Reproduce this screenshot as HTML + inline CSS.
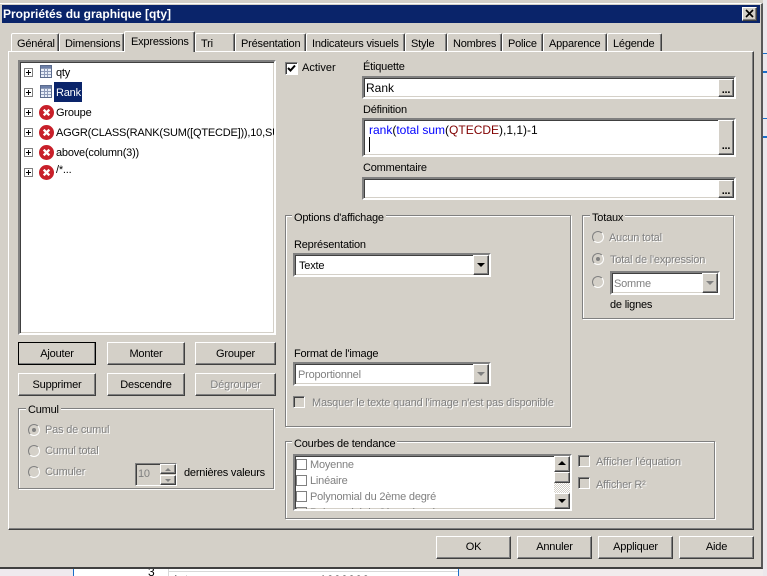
<!DOCTYPE html>
<html lang="fr"><head><meta charset="utf-8"><title>Propriétés du graphique [qty]</title>
<style>
html,body{margin:0;padding:0;background:#d4d0c8}
#p{position:relative;width:767px;height:576px;overflow:hidden;background:#d4d0c8;font:11px/16px "Liberation Sans",Arial,sans-serif;letter-spacing:-.2px;color:#000}
#p div,#p span.t,#p svg{position:absolute;box-sizing:border-box}
.t{white-space:nowrap}
.d{color:#808080;text-shadow:1px 1px 0 #fff}
.btn{background:#d4d0c8;border:1px solid;border-color:#fff #404040 #404040 #fff;box-shadow:inset -1px -1px 0 #808080;text-align:center;white-space:nowrap}
.sunk{background:#fff;border:2px solid;border-color:#808080 #fff #fff #808080;box-shadow:inset 1px 1px 0 #404040,inset -1px -1px 0 #d4d0c8}
.grp{border:1px solid #808080;box-shadow:1px 1px 0 #fff,inset 1px 1px 0 #fff}
.lg{background:#d4d0c8;padding:0 2px;white-space:nowrap}
.tab{background:#d4d0c8;border:1px solid;border-color:#fff #404040 transparent #fff;border-bottom:0;border-radius:2px 2px 0 0;box-shadow:inset -1px 0 0 #808080;padding:2px 0 0 5px;white-space:nowrap;height:18px;top:33px}
.plus{width:9px;height:9px;left:24px;border:1px solid #808080;background:#fff}
.plus:before{content:"";position:absolute;left:1px;top:3px;width:5px;height:1px;background:#000}
.plus:after{content:"";position:absolute;left:3px;top:1px;width:1px;height:5px;background:#000}
.arr{width:0;height:0;border-left:4px solid transparent;border-right:4px solid transparent;border-top:4px solid #000}
.arrup{width:0;height:0;border-left:4px solid transparent;border-right:4px solid transparent;border-bottom:4px solid #000}
.chk{background:#d4d0c8;width:12px;height:12px;border:1px solid;border-color:#808080 #fff #fff #808080;box-shadow:inset 1px 1px 0 #404040}
.rad{width:12px;height:12px;border-radius:50%;border:1px solid;border-color:#808080 #fff #fff #808080;background:#d4d0c8}
.dot{width:4px;height:4px;border-radius:50%;background:#808080;left:3px;top:3px}
</style></head><body><div id="p">

<!-- background behind dialog -->
<div style="left:0;top:569px;width:767px;height:7px;background:#fff"></div>
<div style="left:0;top:569px;width:73px;height:7px;background:#efeaee"></div>
<div style="left:73px;top:569px;width:1px;height:7px;background:#1a6fc9"></div>
<div style="left:168px;top:569px;width:1px;height:7px;background:#d8d8d8"></div>
<div style="left:169px;top:571px;width:289px;height:1px;background:#d8d8d8"></div>
<div style="left:458px;top:569px;width:309px;height:7px;background:#f1eced"></div>
<div style="left:458px;top:569px;width:1px;height:7px;background:#1a6fc9"></div>
<span class="t" style="left:148px;top:564px;font-size:12px">3</span>
<span class="t" style="left:172px;top:572px">Auto</span>
<span class="t" style="left:320px;top:572px;letter-spacing:1px">1000000</span>
<div style="left:763px;top:0;width:4px;height:576px;background:#ece8ec"></div>
<div style="left:763px;top:53px;width:4px;height:1px;background:#1a6fc9"></div>
<div style="left:763px;top:71px;width:4px;height:2px;background:#1a6fc9"></div>
<div style="left:763px;top:118px;width:4px;height:1px;background:#1a6fc9"></div>
<div style="left:763px;top:136px;width:4px;height:2px;background:#1a6fc9"></div>

<!-- dialog -->
<div style="left:0;top:3px;width:763px;height:566px;background:#d4d0c8;border-top:1px solid #fff;border-right:2px solid #595959;border-bottom:2px solid #404040"></div>
<div style="left:2px;top:5px;width:758px;height:18px;background:#0a246a"></div>
<span class="t" style="left:3px;top:6px;color:#fff;font-weight:bold;font-size:12px;line-height:16px;letter-spacing:0">Propriétés du graphique [qty]</span>
<div class="btn" style="left:742px;top:7px;width:15px;height:14px"></div>
<svg style="left:745px;top:9px" width="9" height="9"><path d="M1 1L8 8M8 1L1 8" stroke="#000" stroke-width="1.6"/></svg>

<!-- tab pane -->
<div style="left:8px;top:51px;width:746px;height:479px;background:#d4d0c8;border:1px solid;border-color:#fff #404040 #404040 #fff;box-shadow:inset -1px -1px 0 #808080"></div>

<div class="tab" style="left:11px;width:48px">Général</div>
<div class="tab" style="left:59px;width:65px">Dimensions</div>
<div class="tab" style="left:195px;width:40px">Tri</div>
<div class="tab" style="left:235px;width:71px">Présentation</div>
<div class="tab" style="left:306px;width:99px">Indicateurs visuels</div>
<div class="tab" style="left:405px;width:42px">Style</div>
<div class="tab" style="left:447px;width:55px">Nombres</div>
<div class="tab" style="left:502px;width:41px">Police</div>
<div class="tab" style="left:543px;width:64px">Apparence</div>
<div class="tab" style="left:607px;width:55px">Légende</div>
<div class="tab" style="left:124px;width:71px;top:31px;height:21px;padding-top:2px;padding-left:6px;z-index:2">Expressions</div>

<!-- tree -->
<div class="sunk" style="left:18px;top:60px;width:258px;height:275px"></div>
<div class="plus" style="top:68px"></div>
<div class="plus" style="top:88px"></div>
<div class="plus" style="top:108px"></div>
<div class="plus" style="top:128px"></div>
<div class="plus" style="top:148px"></div>
<div class="plus" style="top:168px"></div>
<svg style="left:40px;top:65px" width="12" height="13"><rect x=".5" y=".5" width="11" height="12" fill="#e8eef8" stroke="#5a6a8c"/><path d="M1 3.5H11M1 6.5H11M1 9.5H11M4.5 3V12M7.5 3V12" stroke="#8d9ab8"/><rect x="1" y="1" width="10" height="2" fill="#6c7fa8"/></svg>
<svg style="left:40px;top:85px" width="12" height="13"><rect x=".5" y=".5" width="11" height="12" fill="#e8eef8" stroke="#5a6a8c"/><path d="M1 3.5H11M1 6.5H11M1 9.5H11M4.5 3V12M7.5 3V12" stroke="#8d9ab8"/><rect x="1" y="1" width="10" height="2" fill="#6c7fa8"/></svg>
<svg style="left:39px;top:105px" width="15" height="15"><circle cx="7.5" cy="7.5" r="7.5" fill="#c8202a"/><path d="M4.7 4.7L10.3 10.3M10.3 4.7L4.7 10.3" stroke="#fff" stroke-width="2.4"/></svg>
<svg style="left:39px;top:125px" width="15" height="15"><circle cx="7.5" cy="7.5" r="7.5" fill="#c8202a"/><path d="M4.7 4.7L10.3 10.3M10.3 4.7L4.7 10.3" stroke="#fff" stroke-width="2.4"/></svg>
<svg style="left:39px;top:145px" width="15" height="15"><circle cx="7.5" cy="7.5" r="7.5" fill="#c8202a"/><path d="M4.7 4.7L10.3 10.3M10.3 4.7L4.7 10.3" stroke="#fff" stroke-width="2.4"/></svg>
<svg style="left:39px;top:165px" width="15" height="15"><circle cx="7.5" cy="7.5" r="7.5" fill="#c8202a"/><path d="M4.7 4.7L10.3 10.3M10.3 4.7L4.7 10.3" stroke="#fff" stroke-width="2.4"/></svg>
<span class="t" style="left:56px;top:65px">qty</span>
<div style="left:54px;top:82px;width:28px;height:20px;background:#0a246a"></div>
<span class="t" style="left:56px;top:85px;color:#fff">Rank</span>
<span class="t" style="left:56px;top:105px">Groupe</span>
<div style="left:56px;top:125px;width:218px;height:16px;overflow:hidden;white-space:nowrap">AGGR(CLASS(RANK(SUM([QTECDE])),10,SUM</div>
<span class="t" style="left:56px;top:145px">above(column(3))</span>
<span class="t" style="left:56px;top:162px">/*...</span>

<!-- left buttons -->
<div class="btn" style="left:18px;top:342px;width:78px;height:23px;line-height:22px;outline:1px solid #000;outline-offset:-1px;border-color:#fff #404040 #404040 #fff">Ajouter</div>
<div class="btn" style="left:107px;top:342px;width:78px;height:23px;line-height:22px">Monter</div>
<div class="btn" style="left:195px;top:342px;width:81px;height:23px;line-height:22px">Grouper</div>
<div class="btn" style="left:18px;top:373px;width:78px;height:23px;line-height:22px">Supprimer</div>
<div class="btn" style="left:107px;top:373px;width:78px;height:23px;line-height:22px">Descendre</div>
<div class="btn d" style="left:195px;top:373px;width:81px;height:23px;line-height:22px">Dégrouper</div>

<!-- cumul -->
<div class="grp" style="left:18px;top:408px;width:256px;height:81px"></div>
<span class="t lg" style="left:26px;top:402px">Cumul</span>
<div class="rad" style="left:28px;top:424px"><div class="dot"></div></div>
<div class="rad" style="left:28px;top:445px"></div>
<div class="rad" style="left:28px;top:466px"></div>
<span class="t d" style="left:45px;top:422px">Pas de cumul</span>
<span class="t d" style="left:45px;top:443px">Cumul total</span>
<span class="t d" style="left:45px;top:464px">Cumuler</span>
<div style="left:135px;top:463px;width:42px;height:23px;background:#d4d0c8;border:1px solid;border-color:#808080 #fff #fff #808080;box-shadow:inset 1px 1px 0 #404040"></div>
<span class="t d" style="left:138px;top:466px;text-shadow:none">10</span>
<div class="btn" style="left:160px;top:464px;width:16px;height:10px"></div>
<div class="btn" style="left:160px;top:475px;width:16px;height:10px"></div>
<div class="arrup" style="left:165px;top:468px;border-width:0 3px 3px;border-bottom-color:#808080"></div>
<div class="arr" style="left:165px;top:479px;border-width:3px 3px 0;border-top-color:#808080"></div>
<span class="t" style="left:184px;top:465px">dernières valeurs</span>

<!-- right top -->
<div class="chk" style="left:285px;top:62px;width:13px;height:13px;background:#fff"></div>
<svg style="left:287px;top:64px" width="9" height="9"><path d="M1 4L3.5 6.5L8 1.5" fill="none" stroke="#000" stroke-width="2"/></svg>
<span class="t" style="left:302px;top:60px;letter-spacing:0">Activer</span>

<span class="t" style="left:363px;top:59px">Étiquette</span>
<div class="sunk" style="left:362px;top:76px;width:374px;height:23px"></div>
<span class="t" style="left:366px;top:80px;font-size:12px;letter-spacing:0">Rank</span>
<div class="btn" style="left:718px;top:79px;width:16px;height:18px;line-height:20px;font-weight:bold">...</div>

<span class="t" style="left:363px;top:102px">Définition</span>
<div class="sunk" style="left:362px;top:118px;width:374px;height:39px"></div>
<span class="t" style="left:369px;top:122px;color:#000;font-size:12px;letter-spacing:0"><span style="color:#00f">rank</span>(<span style="color:#00f">total sum</span>(<span style="color:#800000">QTECDE</span>),1,1)-1</span>
<div style="left:369px;top:137px;width:1px;height:15px;background:#000"></div>
<div class="btn" style="left:718px;top:120px;width:16px;height:35px;line-height:50px;font-weight:bold">...</div>

<span class="t" style="left:363px;top:160px">Commentaire</span>
<div class="sunk" style="left:362px;top:177px;width:374px;height:23px"></div>
<div class="btn" style="left:718px;top:180px;width:16px;height:18px;line-height:20px;font-weight:bold">...</div>

<!-- options -->
<div class="grp" style="left:285px;top:215px;width:286px;height:212px"></div>
<span class="t lg" style="left:292px;top:210px">Options d'affichage</span>
<span class="t" style="left:294px;top:237px">Représentation</span>
<div class="sunk" style="left:293px;top:253px;width:198px;height:24px"></div>
<span class="t" style="left:299px;top:258px">Texte</span>
<div class="btn" style="left:473px;top:255px;width:16px;height:20px"></div>
<div class="arr" style="left:477px;top:263px"></div>

<span class="t" style="left:294px;top:346px">Format de l'image</span>
<div class="sunk" style="left:293px;top:362px;width:198px;height:24px"></div>
<span class="t" style="left:298px;top:367px;color:#808080">Proportionnel</span>
<div class="btn" style="left:473px;top:364px;width:16px;height:20px"></div>
<div class="arr" style="left:477px;top:372px;border-top-color:#808080"></div>
<div class="chk" style="left:293px;top:396px"></div>
<span class="t d" style="left:312px;top:395px">Masquer le texte quand l'image n'est pas disponible</span>

<!-- totaux -->
<div class="grp" style="left:582px;top:215px;width:152px;height:104px"></div>
<span class="t lg" style="left:590px;top:210px">Totaux</span>
<div class="rad" style="left:592px;top:231px"></div>
<div class="rad" style="left:592px;top:253px"><div class="dot"></div></div>
<div class="rad" style="left:592px;top:276px"></div>
<span class="t d" style="left:609px;top:230px">Aucun total</span>
<span class="t d" style="left:610px;top:252px">Total de l'expression</span>
<div class="sunk" style="left:610px;top:271px;width:110px;height:24px"></div>
<span class="t" style="left:614px;top:276px;color:#808080">Somme</span>
<div class="btn" style="left:702px;top:273px;width:16px;height:20px"></div>
<div class="arr" style="left:706px;top:281px;border-top-color:#808080"></div>
<span class="t" style="left:610px;top:297px">de lignes</span>

<!-- courbes -->
<div class="grp" style="left:285px;top:441px;width:430px;height:78px"></div>
<span class="t lg" style="left:292px;top:436px">Courbes de tendance</span>
<div class="sunk" style="left:293px;top:454px;width:279px;height:57px;overflow:hidden"></div>
<div style="left:295px;top:456px;width:259px;height:53px;overflow:hidden">
  <div style="left:1px;top:3px;width:11px;height:11px;border:1px solid #808080"></div>
  <div style="left:1px;top:19px;width:11px;height:11px;border:1px solid #808080"></div>
  <div style="left:1px;top:35px;width:11px;height:11px;border:1px solid #808080"></div>
  <div style="left:1px;top:51px;width:11px;height:11px;border:1px solid #808080"></div>
  <span class="t" style="left:15px;top:1px;color:#808080">Moyenne</span>
  <span class="t" style="left:15px;top:17px;color:#808080">Linéaire</span>
  <span class="t" style="left:15px;top:33px;color:#808080">Polynomial du 2ème degré</span>
  <span class="t" style="left:15px;top:49px;color:#808080">Polynomial du 3ème degré</span>
</div>
<div style="left:554px;top:472px;width:16px;height:21px;background:repeating-conic-gradient(#d4d0c8 0 25%,#fff 0 50%) 0 0/2px 2px"></div>
<div class="btn" style="left:554px;top:456px;width:16px;height:16px"></div>
<div class="arrup" style="left:558px;top:461px"></div>
<div class="btn" style="left:554px;top:472px;width:16px;height:11px"></div>
<div class="btn" style="left:554px;top:493px;width:16px;height:16px"></div>
<div class="arr" style="left:558px;top:499px"></div>
<div class="chk" style="left:578px;top:455px"></div>
<div class="chk" style="left:578px;top:477px"></div>
<span class="t d" style="left:596px;top:454px;letter-spacing:-.1px">Afficher l'équation</span>
<span class="t d" style="left:596px;top:477px">Afficher R²</span>

<!-- bottom -->
<div class="btn" style="left:436px;top:536px;width:75px;height:23px;line-height:21px">OK</div>
<div class="btn" style="left:517px;top:536px;width:75px;height:23px;line-height:21px">Annuler</div>
<div class="btn" style="left:598px;top:536px;width:75px;height:23px;line-height:21px">Appliquer</div>
<div class="btn" style="left:679px;top:536px;width:75px;height:23px;line-height:21px">Aide</div>
</div></body></html>
